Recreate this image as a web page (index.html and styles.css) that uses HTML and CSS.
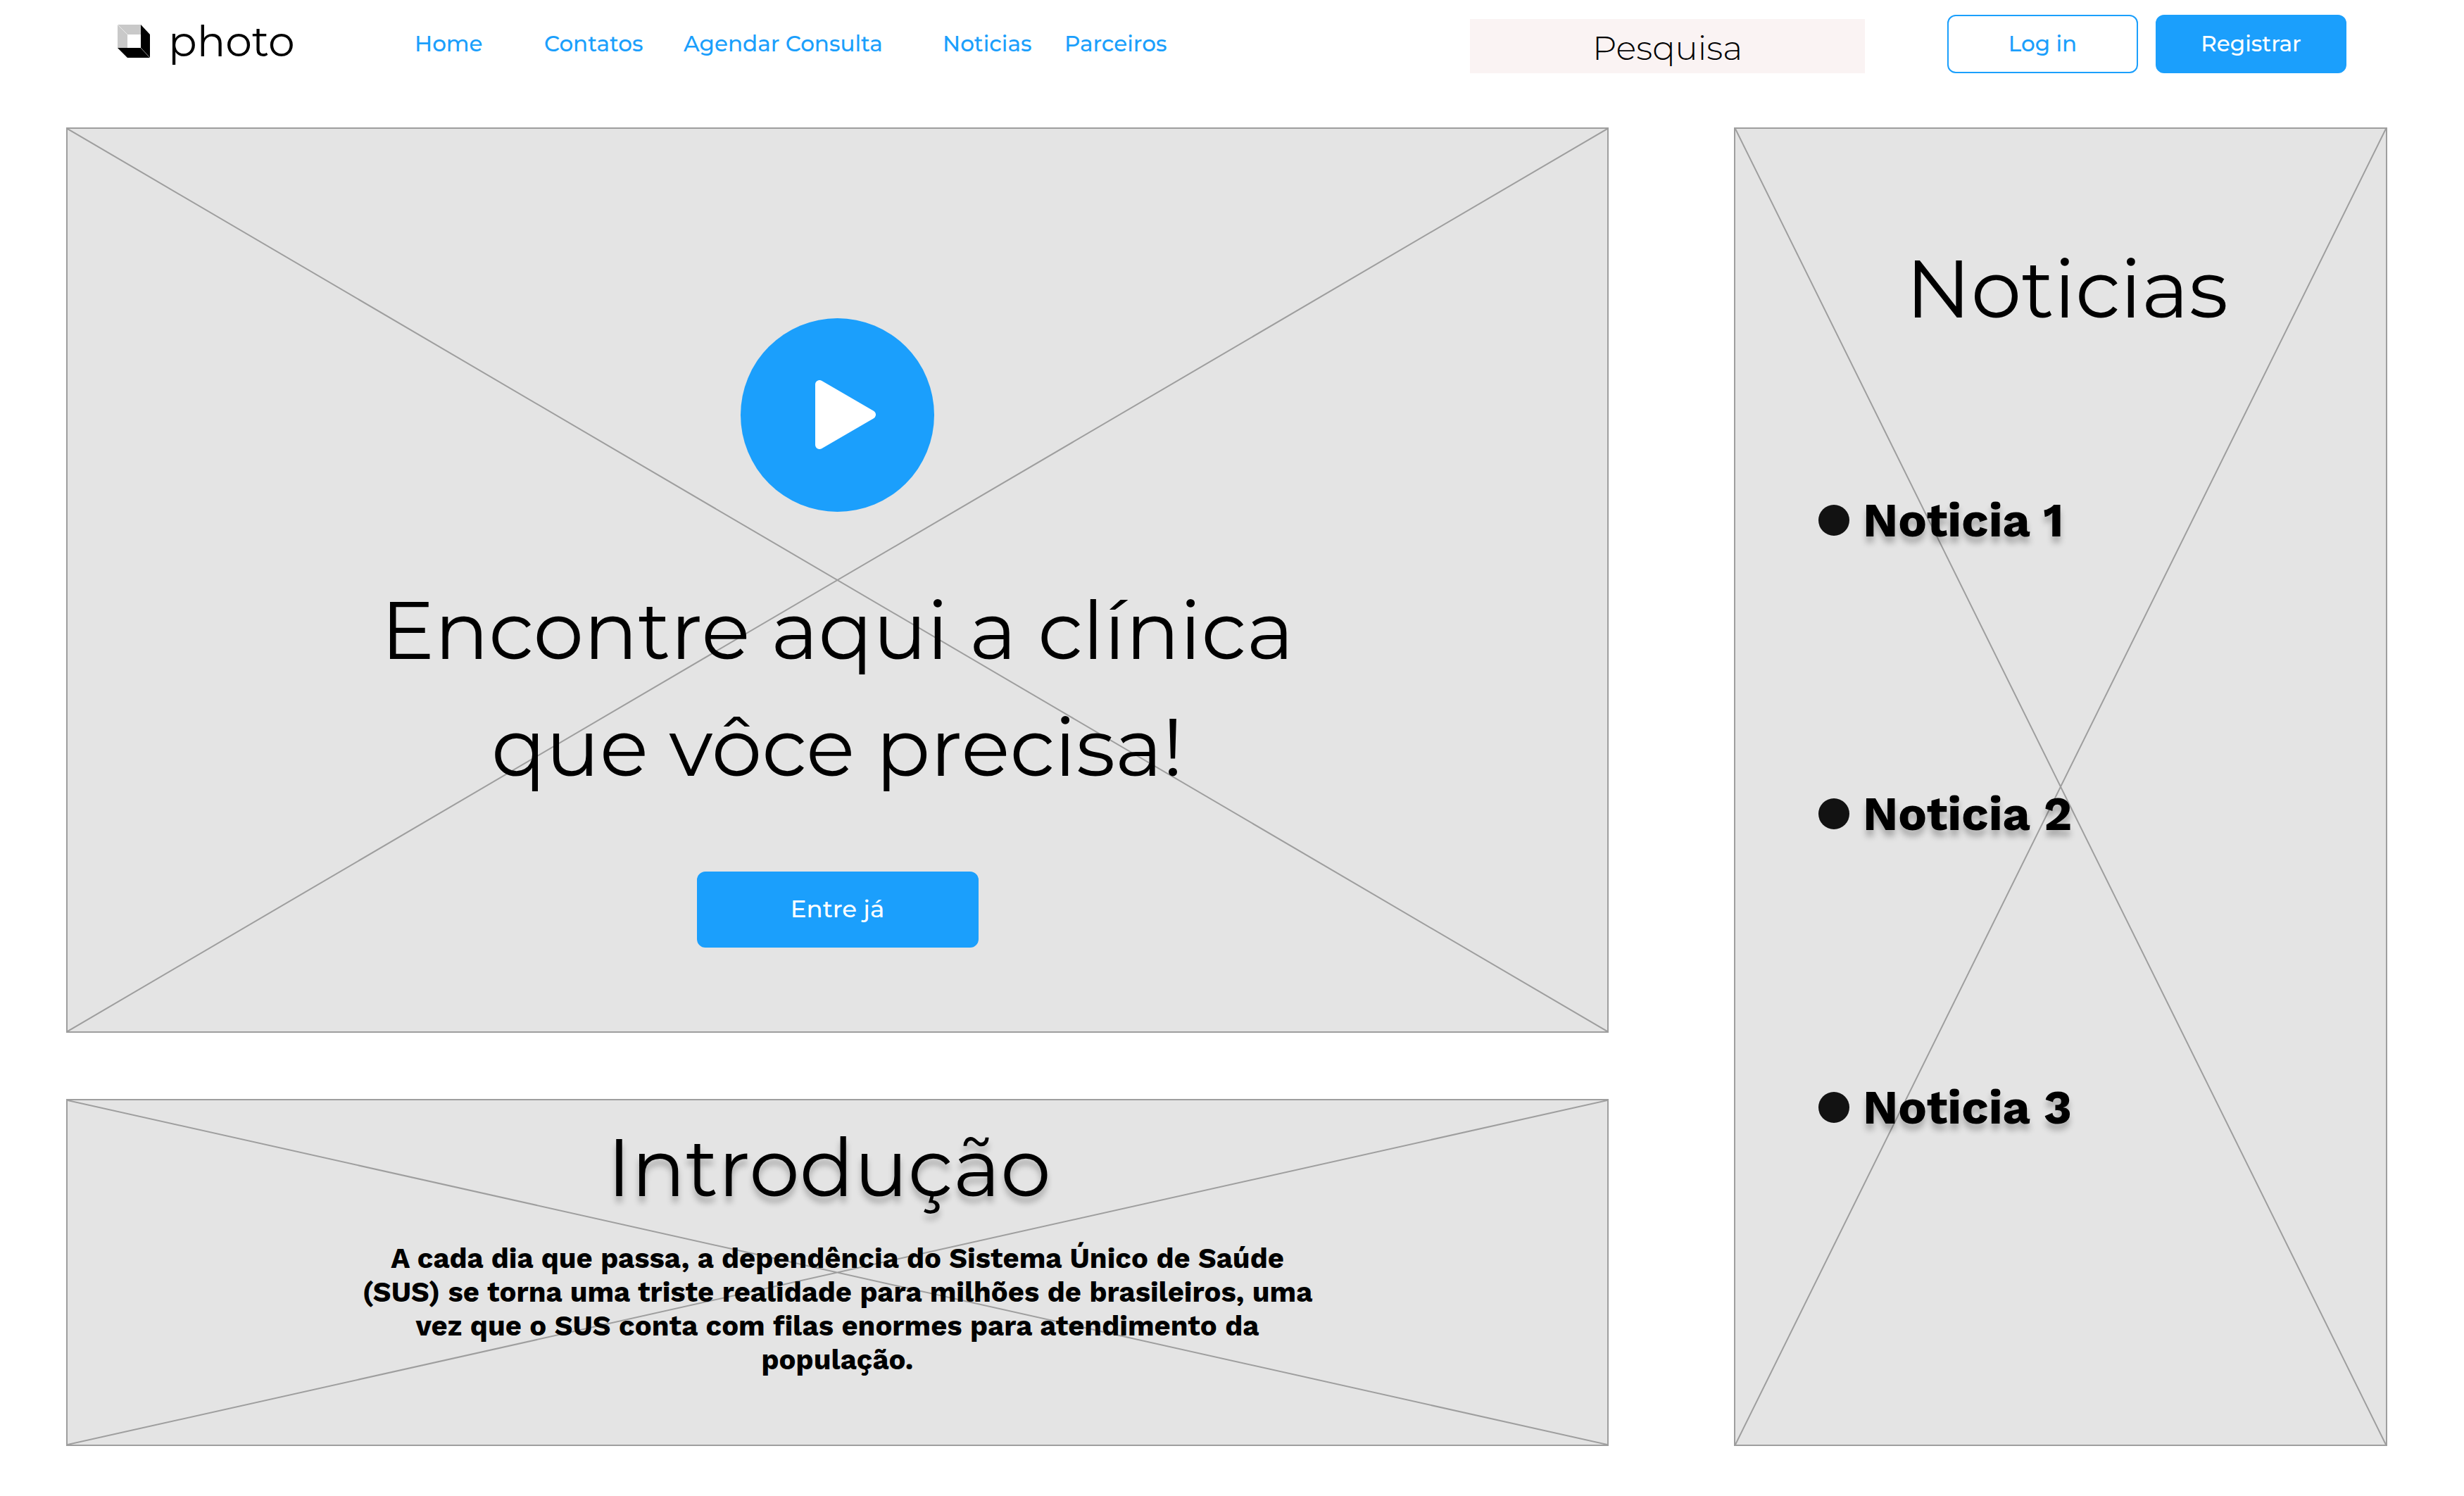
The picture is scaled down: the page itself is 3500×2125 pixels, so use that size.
FILE: index.html
```html
<!DOCTYPE html>
<html lang="pt-BR">
<head>
  <meta charset="utf-8">
  <meta name="viewport" content="width=device-width, initial-scale=1">
  <title>photo</title>
  <link rel="stylesheet" href="styles.css">
</head>
<body>
  <header class="header">
    <a class="brand" href="#">
      <svg class="brand-icon" viewBox="0 0 46 47" aria-hidden="true">
        <path fill="#c9c9c9" d="M0 0H33V14H14V33H0Z"/>
        <path fill="#000" d="M33 0L46 14V47H14L0 33H33Z"/>
        <path stroke="#fff" stroke-width="0.6" d="M0 0L14 14M33 33L46 47"/>
      </svg>
      <span>photo</span>
    </a>
    <nav class="nav">
      <a href="#">Home</a>
      <a href="#">Contatos</a>
      <a href="#">Agendar Consulta</a>
      <a href="#">Noticias</a>
      <a href="#">Parceiros</a>
    </nav>
    <input class="search" type="text" placeholder="Pesquisa" aria-label="Pesquisa">
    <div class="actions">
      <button class="button button-outline" type="button">Log in</button>
      <button class="button" type="button">Registrar</button>
    </div>
  </header>

  <main class="page">
    <div class="column">
      <section class="panel hero">
        <svg class="cross" viewBox="0 0 100 100" preserveAspectRatio="none" aria-hidden="true"><path d="M0 0L100 100M100 0L0 100"/></svg>
        <button class="play" type="button" aria-label="Reproduzir">
          <svg class="play-icon" viewBox="0 0 86 98" aria-hidden="true"><path d="M6 6V92L80 49Z"/></svg>
        </button>
        <h1 class="title hero-title">Encontre aqui a clínica<br>que vôce precisa!</h1>
        <button class="button button-large" type="button">Entre já</button>
      </section>
      <section class="panel intro">
        <svg class="cross" viewBox="0 0 100 100" preserveAspectRatio="none" aria-hidden="true"><path d="M0 0L100 100M100 0L0 100"/></svg>
        <h2 class="title intro-title">Introdução</h2>
        <p class="intro-text">A cada dia que passa, a dependência do Sistema Único de Saúde (SUS) se torna uma triste realidade para milhões de brasileiros, uma vez que o SUS conta com filas enormes para atendimento da população.</p>
      </section>
    </div>
    <aside class="panel news">
      <svg class="cross" viewBox="0 0 100 100" preserveAspectRatio="none" aria-hidden="true"><path d="M0 0L100 100M100 0L0 100"/></svg>
      <h2 class="title news-title">Noticias</h2>
      <ul class="news-list">
        <li>Noticia 1</li>
        <li>Noticia 2</li>
        <li>Noticia 3</li>
      </ul>
    </aside>
  </main>
</body>
</html>
```
FILE: styles.css
```css
* {
  box-sizing: border-box;
}

body {
  margin: 0;
  background: #fff;
  color: #000;
  font-family: Montserrat, "Open Sans", sans-serif;
}

h1, h2, p, ul {
  margin: 0;
  padding: 0;
}

/* Header */
.header {
  display: flex;
  align-items: center;
  padding: 21px 167px 77px;
}

.brand {
  display: flex;
  align-items: center;
  gap: 26px;
  width: 422px;
  padding-bottom: 8px;
  color: #000;
  font-size: 60px;
  line-height: 72px;
  text-decoration: none;
}

.brand-icon {
  width: 46px;
  height: 47px;
}

.nav {
  display: grid;
  grid-template-columns: 184px 198px 368px 173px auto;
  padding-bottom: 2px;
  font-size: 31px;
  font-weight: 500;
  line-height: 40px;
}

.nav a {
  color: #1b9ffc;
  text-decoration: none;
  white-space: nowrap;
}

.search {
  align-self: flex-end;
  width: 561px;
  height: 77px;
  margin-left: auto;
  padding: 4px 16px 0;
  border: 0;
  background: #faf3f3;
  color: #000;
  font: 300 48px Montserrat, "Open Sans", sans-serif;
  text-align: center;
}

.search::placeholder {
  color: #000;
  opacity: 1;
}

.actions {
  display: flex;
  gap: 25px;
  margin-left: 117px;
}

.button {
  width: 271px;
  height: 83px;
  padding: 0 0 2px;
  border: 2px solid #1b9ffc;
  border-radius: 12px;
  background: #1b9ffc;
  color: #fff;
  font: 500 31px Montserrat, "Open Sans", sans-serif;
}

.button-outline {
  background: #fff;
  color: #1b9ffc;
}

.button-large {
  width: 400px;
  height: 108px;
  font-size: 34px;
}

/* Panels */
.page {
  display: grid;
  grid-template-columns: 2191fr 928fr;
  gap: 178px;
  padding: 0 109px 71px 94px;
}

.column {
  display: flex;
  flex-direction: column;
  gap: 94px;
}

.panel {
  position: relative;
  z-index: 0;
  border: 2px solid #9e9e9e;
  background: #e4e4e4;
}

.cross {
  position: absolute;
  inset: 0;
  z-index: -1;
  width: 100%;
  height: 100%;
}

.cross path {
  fill: none;
  stroke: #9e9e9e;
  stroke-width: 2px;
  vector-effect: non-scaling-stroke;
}

.title {
  font-size: 114px;
  font-weight: 400;
  line-height: 140px;
  text-align: center;
}

.hero {
  display: flex;
  flex-direction: column;
  align-items: center;
  padding: 269px 40px 119px;
}

.play {
  display: flex;
  align-items: center;
  justify-content: center;
  width: 275px;
  height: 275px;
  padding: 0 0 2px 22px;
  border: 0;
  border-radius: 50%;
  background: #1b9ffc;
}

.play-icon {
  width: 86px;
  height: 98px;
}

.play-icon path {
  fill: #fff;
  stroke: #fff;
  stroke-width: 12px;
  stroke-linejoin: round;
}

.hero-title {
  margin: 86px 0 93px;
  line-height: 166px;
}

.intro {
  padding: 26px 40px 96px;
}

.intro-title {
  padding-right: 24px;
  text-shadow: 0 9px 9px rgba(0, 0, 0, 0.25);
}

.intro-text {
  max-width: 1372px;
  margin: 35px auto 0;
  font: 700 40px/48px "Work Sans", "Open Sans", sans-serif;
  text-align: center;
}

.news {
  padding: 158px 0 0;
}

.news-title {
  padding-left: 18px;
}

.news-list {
  display: flex;
  flex-direction: column;
  gap: 337px;
  margin-top: 218px;
  padding-left: 118px;
  font: 700 68px/80px "Work Sans", "Open Sans", sans-serif;
  list-style: none;
  text-shadow: 0 9px 9px rgba(0, 0, 0, 0.25);
}

.news-list li {
  display: flex;
  align-items: center;
  gap: 19px;
}

.news-list li::before {
  width: 44px;
  height: 44px;
  border-radius: 50%;
  background: #121212;
  content: "";
}
```
